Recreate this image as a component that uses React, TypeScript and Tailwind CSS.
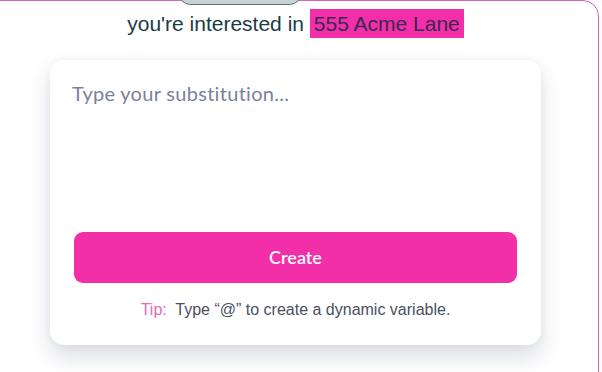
const App = () => {
  return (
    <div className="relative h-[372px] w-[602px] overflow-hidden bg-white">
      <div className="-ml-[20px] h-[420px] w-[619px] rounded-[16px] border border-[#d763ba]">
        <div className="flex flex-col items-center">
          <p
            className="ml-[12px] mt-[8px] text-[21px] leading-[29px] text-[#1b3b45]"
            style={{ fontFamily: '"Liberation Sans", Arial, sans-serif' }}
          >
            you're interested in{" "}
            <span className="inline-block bg-[#f22fa9] px-[4px] text-[#3a2752]">555 Acme Lane</span>
          </p>
        </div>
        <div className="ml-[69px] mt-[22px] w-[491px] rounded-[14px] bg-white px-6 pb-[25px] pt-[20px] shadow-[0_12px_22px_rgba(40,50,90,0.16),0_0_8px_rgba(40,50,90,0.05)]">
          <textarea
            className="-ml-[2px] block h-[152px] w-full resize-none bg-transparent text-[20px] leading-[26px] tracking-[0.3px] text-[#3b4256] outline-none placeholder:text-[#7b819b]"
            style={{ fontFamily: 'Lato, "Open Sans", sans-serif' }}
            placeholder="Type your substitution..."
          />
          <button
            className="flex h-[51px] w-full items-center justify-center rounded-[9px] bg-[#f22fa9] text-[18px] font-semibold text-white"
            style={{ fontFamily: 'Lato, "Open Sans", sans-serif' }}
          >
            Create
          </button>
          <p
            className="mt-[16px] text-center text-[16px] leading-[21px] text-[#4a5061]"
            style={{ fontFamily: '"Liberation Sans", Arial, sans-serif' }}
          >
            <span className="text-[#e46ab8]">Tip:</span>&nbsp; Type “@” to create a dynamic variable.
          </p>
        </div>
      </div>
      <div className="absolute left-[178px] top-[-20px] h-[25px] w-[124px] rounded-full border border-[#5f7073] bg-[#c9d2d4]" />
    </div>
  );
};

export default App;
